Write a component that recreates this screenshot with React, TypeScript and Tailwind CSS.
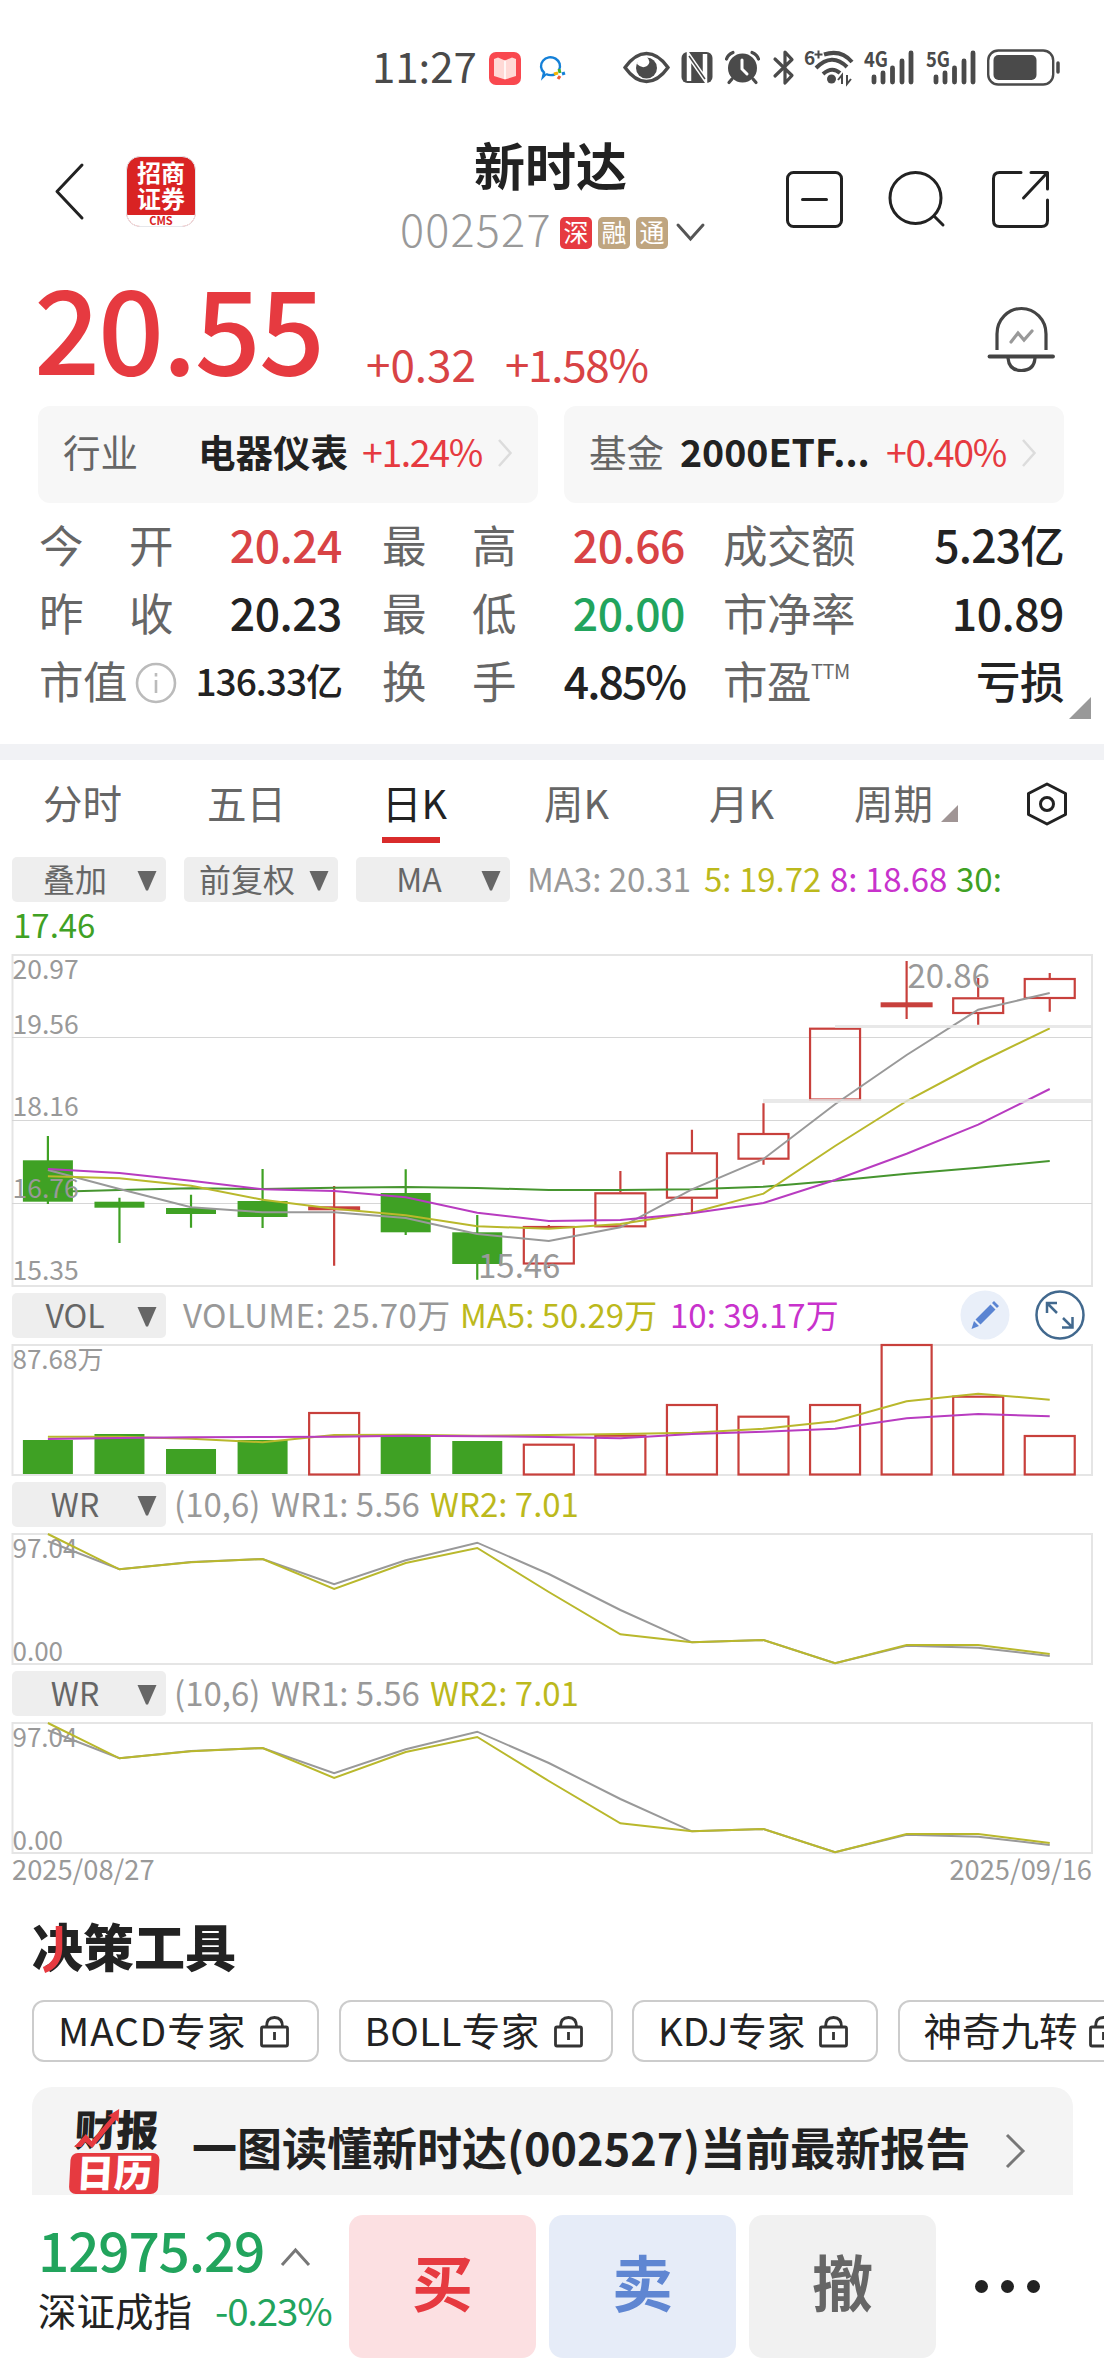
import type { ReactNode } from "react";
import clsx from "clsx";

const GREEN = "#3fa124";
const RED = "#c8403c";
const GRAY = "#999999";
const YELLOW = "#b9b82c";
const PURPLE = "#b83cc0";

const STEP = 71.56;
const xAt = (i: number) => 47.9 + STEP * i;
const toPoints = (ys: number[]) => ys.map((y, i) => `${xAt(i)},${y}`).join(" ");

type Candle = { up: boolean; top: number; bottom: number; high: number; low: number };

const candles: Candle[] = [
  { up: false, top: 1160.3, bottom: 1201.7, high: 1136, low: 1204 },
  { up: false, top: 1201.7, bottom: 1207.7, high: 1197.7, low: 1243 },
  { up: false, top: 1208, bottom: 1214, high: 1194.7, low: 1227.7 },
  { up: false, top: 1201, bottom: 1217, high: 1169, low: 1228 },
  { up: true, top: 1206.3, bottom: 1210.3, high: 1186, low: 1265.7 },
  { up: false, top: 1193, bottom: 1232.3, high: 1169.3, low: 1235 },
  { up: false, top: 1232.3, bottom: 1264, high: 1215, low: 1279.7 },
  { up: true, top: 1226, bottom: 1264.5, high: 1225, low: 1268 },
  { up: true, top: 1192.3, bottom: 1227.3, high: 1171, low: 1227.3 },
  { up: true, top: 1152.3, bottom: 1198.7, high: 1129.7, low: 1213.3 },
  { up: true, top: 1133, bottom: 1159.7, high: 1103.3, low: 1164.7 },
  { up: true, top: 1027.7, bottom: 1100.5, high: 1027.7, low: 1100.5 },
  { up: true, top: 1002.3, bottom: 1007.3, high: 961, low: 1019 },
  { up: true, top: 997.3, bottom: 1014, high: 978, low: 1024.7 },
  { up: true, top: 978, bottom: 999, high: 973, low: 1011.7 },
];

const ma3 = [1170, 1189, 1207.3, 1212.3, 1212.3, 1218, 1234, 1241, 1227.3, 1189.3, 1159, 1104.3, 1055, 1009.7, 993];
const ma5 = [1176.3, 1178.3, 1185.7, 1199.7, 1208.7, 1215.3, 1226.3, 1228.7, 1224, 1212.7, 1193.7, 1146, 1101, 1063, 1028.3];
const ma8 = [1169, 1173, 1180.7, 1189.3, 1191, 1197.3, 1212.7, 1221, 1220, 1213.3, 1203, 1180, 1153.7, 1124.7, 1089];
const ma30 = [1192, 1190, 1188.3, 1189, 1187.7, 1187, 1188, 1190, 1190, 1189.3, 1186.7, 1180.7, 1173.7, 1167.7, 1161];

const volumes = [
  { up: false, y: 96 }, { up: false, y: 90 }, { up: false, y: 105 }, { up: false, y: 96 }, { up: true, y: 68 },
  { up: false, y: 92 }, { up: false, y: 97 }, { up: true, y: 99.7 }, { up: true, y: 90.7 }, { up: true, y: 60 },
  { up: true, y: 71.7 }, { up: true, y: 60 }, { up: true, y: 0 }, { up: true, y: 51.7 }, { up: true, y: 91 },
];
const volMa5 = [92.7, 92.7, 94.7, 98.3, 91, 90.7, 91.7, 91, 90, 88.7, 84.7, 77.3, 57.3, 49.7, 55.7];
const volMa10 = [95, 94, 93.3, 93, 92.7, 91.7, 92.3, 93, 94.3, 90, 87.7, 84.7, 74.3, 70, 72.3];

const wr1 = [9.3, 37.3, 30, 27, 52.3, 28.3, 10.7, 42, 78, 110.3, 108, 131.3, 113.7, 115.7, 124];
const wr2 = [2, 37.3, 30.3, 27, 57, 31, 16, 60, 102.3, 110.3, 108, 131.3, 113, 113, 122];

function StatusBar() {
  return (
    <div className="flex h-[136px] items-start pt-[48px] text-[#4a4a4a]">
      <span className="ml-[372px] h-10 w-[116px] text-[42px] leading-[34px]">11:27</span>
      <svg className="h-10 w-[34px]" viewBox="0 0 34 40">
        <rect x="1" y="4" width="32" height="33" rx="7" fill="#f9484f" />
        <path d="M6 11 L10 9.500 L17 12.500 L24 9.500 L28 11 V28 L17 31.500 L6 28Z" fill="#ffd9d6" />
        <path d="M17 12.500 V31" stroke="#fff" strokeWidth="1.500" />
      </svg>
      <svg className="ml-[16px] h-10 w-[30px]" viewBox="0 0 30 40" fill="none" strokeWidth="2.400">
        <path d="M8 26 L5 29 L6 24.500 A9.500 8.800 0 1 1 21 22" stroke="#1480d8" />
        <path d="M8 26 Q12 28 17 26.500" stroke="#1480d8" />
        <path d="M21 21 L22 25" stroke="#43b02a" strokeWidth="3" />
        <path d="M24 26 L27 25" stroke="#1480d8" strokeWidth="3" />
        <path d="M16 26 L20 25" stroke="#f5b400" strokeWidth="3" />
        <path d="M20 31 L22 28" stroke="#ee5a36" strokeWidth="3" />
      </svg>
      <svg className="ml-[55px] h-10 w-[47px]" viewBox="0 0 47 40">
        <path d="M2 19.500 Q12 5.500 23.500 5.500 T45 19.500 Q35 33.500 23.500 33.500 T2 19.500Z" fill="none" stroke="#4a4a4a" strokeWidth="3.400" />
        <circle cx="23.500" cy="20" r="10.500" fill="#4a4a4a" />
        <path d="M23 8 Q29 14 24 18 Q19 21 14 16 Q15 9 23 8Z" fill="#fff" />
      </svg>
      <svg className="ml-[11px] h-10 w-[32px]" viewBox="0 0 32 40">
        <rect x="0.500" y="4" width="31" height="31" rx="6" fill="#4a4a4a" />
        <path d="M8 33 V8 L24 31 V6" fill="none" stroke="#fff" strokeWidth="4.500" />
        <path d="M8 8 L24 31" stroke="#4a4a4a" strokeWidth="1.500" />
      </svg>
      <svg className="ml-[11px] h-10 w-[37px]" viewBox="0 0 37 40" fill="none" stroke="#4a4a4a" strokeLinecap="round">
        <circle cx="18.500" cy="20" r="14.500" fill="#4a4a4a" stroke="none" />
        <path d="M2.500 11 Q4 6.500 9 4.500 M34.500 11 Q33 6.500 28 4.500 M8 31 L5 34.500 M29 31 L32 34.500" strokeWidth="3.200" />
        <path d="M18 12 V21 L23 26" stroke="#fff" strokeWidth="3" />
      </svg>
      <svg className="ml-[11px] h-10 w-[24px]" viewBox="0 0 24 40" fill="none" stroke="#4a4a4a" strokeWidth="3.200" strokeLinecap="round" strokeLinejoin="round">
        <path d="M3 11 L20 27.500 L13 35 V4 L20 11.500 L3 28" />
      </svg>
      <svg className="ml-[8px] h-10 w-[52px] overflow-visible" viewBox="0 0 52 40" fill="none" stroke="#4a4a4a" strokeWidth="4">
        <text x="0" y="17" fontSize="19" fontWeight="700" fill="#4a4a4a" stroke="none">6</text>
        <path d="M10.500 6.500 h8 M14.500 2.500 v8" strokeWidth="2" />
        <path d="M20 6.500 Q37 1 48 14 M12 20 Q28 4 43 19 M19 26 Q28 18 36 25" />
        <circle cx="27.500" cy="31" r="4.500" fill="#4a4a4a" stroke="none" />
        <path d="M34 32 L38 27 V36 M43 27 V36 L47 31" strokeWidth="2" />
      </svg>
      {["4G", "5G"].map((net) => (
        <svg key={net} className="ml-[8px] mr-[4px] h-10 w-[50px] overflow-visible" viewBox="0 0 50 40">
          <text x="0" y="19" fontSize="21" fontWeight="700" textLength="24" lengthAdjust="spacingAndGlyphs" fill="#4a4a4a">{net}</text>
          <path d="M10 29 V34 M19 25 V34 M28.500 20 V34 M38 13 V34 M47 5 V34" stroke="#4a4a4a" strokeWidth="4.800" strokeLinecap="round" />
        </svg>
      ))}
      <svg className="ml-[7px] h-10 w-[75px]" viewBox="0 0 75 40">
        <rect x="1.200" y="2.500" width="65" height="34" rx="10" fill="none" stroke="#4a4a4a" strokeWidth="2.400" />
        <rect x="6.500" y="7" width="43" height="25" rx="5" fill="#4a4a4a" />
        <path d="M71 15 V24" stroke="#4a4a4a" strokeWidth="3.500" strokeLinecap="round" />
      </svg>
    </div>
  );
}

function Badge({ children, className }: { children: ReactNode; className: string }) {
  return (
    <span className={clsx("flex h-8 w-8 items-center justify-center rounded-[5px] text-[25px] leading-none text-white", className)}>
      <span className="-mt-[3px]">{children}</span>
    </span>
  );
}

function Header() {
  return (
    <div className="flex h-[134px] items-start">
      <svg className="ml-[54px] mt-[25px] h-[62px] w-[32px]" viewBox="0 0 32 62" fill="none" stroke="#222" strokeWidth="3" strokeLinecap="round" strokeLinejoin="round">
        <path d="M28 4 L3 30.500 L28 57" />
      </svg>
      <div className="ml-[40px] mt-[20px] flex h-[71px] w-[70px] flex-col items-center overflow-hidden rounded-[14px] border border-gray-200 bg-[#d92323] text-white">
        <div className="pt-[2px] text-center text-[24px] font-bold leading-[26px]">
          <div>招商</div>
          <div>证券</div>
        </div>
        <div className="mt-[4px] flex w-[72px] flex-1 items-center justify-center bg-white pb-[2px] text-[11px] font-bold leading-none text-[#d92323]">CMS</div>
      </div>
      <div className="ml-[194px] w-[330px]">
        <div className="pl-[84px] pt-px text-[51px] font-bold leading-[54px] text-[#222]">新时达</div>
        <div className="mt-[12px] flex h-[50px] items-center pl-[10px]">
          <span className="w-[160px] text-[45px] font-light leading-[50px] tracking-[1.2px] text-[#999]">002527</span>
          <div className="mt-[10px] flex h-8 gap-[6px]">
            <Badge className="bg-[#e63a40]">深</Badge>
            <Badge className="bg-[#bfa580]">融</Badge>
            <Badge className="bg-[#bfa580]">通</Badge>
          </div>
          <svg className="ml-[7px] mt-[8px] h-5 w-[32px]" viewBox="0 0 32 20" fill="none" stroke="#555" strokeWidth="3" strokeLinecap="round">
            <path d="M3 3 L15.500 17 L28 3" />
          </svg>
        </div>
      </div>
      <div className="ml-[65px] mt-[34px] flex gap-[43px]">
        <svg className="h-[60px] w-[60px]" viewBox="0 0 60 60" fill="none" stroke="#222" strokeWidth="3" strokeLinecap="round">
          <rect x="2.500" y="2.500" width="54" height="54" rx="6" />
          <path d="M17.500 29.500 H41.500" />
        </svg>
        <svg className="h-[60px] w-[60px]" viewBox="0 0 60 60" fill="none" stroke="#222" strokeWidth="3" strokeLinecap="round">
          <circle cx="27.500" cy="28" r="25.500" />
          <path d="M46 46 L55 55" />
        </svg>
        <svg className="h-[60px] w-[60px]" viewBox="0 0 60 60" fill="none" stroke="#222" strokeWidth="3" strokeLinecap="round" strokeLinejoin="round">
          <path d="M30 2.500 H8.500 Q2.500 2.500 2.500 8.500 V50.500 Q2.500 56.500 8.500 56.500 H50.500 Q56.500 56.500 56.500 50.500 V30" />
          <path d="M40 2.500 H56.500 V19 M56 3 L32.500 28" />
        </svg>
      </div>
    </div>
  );
}

function Price() {
  return (
    <div className="flex h-[136px] items-start text-[#e63a40]">
      <div className="-mt-[4px] ml-[34px] w-[332px] text-[116px] font-medium leading-[116px] tracking-[-2px]">20.55</div>
      <div className="mt-[66px] w-[139px] text-[44px] leading-[54px] text-[#d84345]">+0.32</div>
      <div className="mt-[66px] w-[481px] text-[44px] leading-[54px] tracking-[-1.3px] text-[#d84345]">+1.58%</div>
      <svg className="mt-[36px] h-[70px] w-[70px]" viewBox="0 0 70 70" fill="none" stroke="#444" strokeWidth="3.200" strokeLinecap="round">
        <path d="M11 44 V28 A24.500 25.500 0 0 1 60 28 V44" strokeLinecap="butt" />
        <path d="M3.500 50.500 H67" strokeWidth="3.800" />
        <path d="M22 52 Q23 64.500 35.500 64.500 T49 52" />
        <path d="M25 36 L32 27 L38 34 L46 25" stroke="#999" />
      </svg>
    </div>
  );
}

function Arrow() {
  return (
    <svg className="mt-1 h-[30px] w-4" viewBox="0 0 16 30" fill="none" stroke="#dcdcdc" strokeWidth="2.500">
      <path d="M2 2 L13.500 15 L2 28" />
    </svg>
  );
}

function RelatedCards() {
  return (
    <div className="flex gap-[26px] pl-[38px]">
      <div className="flex h-[97px] w-[500px] items-center rounded-[12px] bg-[#f7f7f7] pb-[7px] text-[37.500px] leading-[50px]">
        <span className="ml-[25px] w-[135px] text-[#666]">行业</span>
        <span className="w-[164px] font-bold text-[#222]">电器仪表</span>
        <span className="w-[135px] tracking-[-1.4px] text-[#e63a40]">+1.24%</span>
        <Arrow />
      </div>
      <div className="flex h-[97px] w-[500px] items-center rounded-[12px] bg-[#f7f7f7] pb-[7px] text-[37.500px] leading-[50px]">
        <span className="ml-[25px] w-[91px] text-[#666]">基金</span>
        <span className="w-[206px] font-bold text-[#222]">2000ETF...</span>
        <span className="w-[135px] tracking-[-1.4px] text-[#e63a40]">+0.40%</span>
        <Arrow />
      </div>
    </div>
  );
}

function Stat({ label, value, className }: { label: ReactNode; value: string; className?: string }) {
  return (
    <div className="flex h-[68px] items-center justify-between">
      <span className="flex w-[134px] shrink-0 justify-between whitespace-nowrap text-[44.500px] leading-[60px] text-[#666]">{label}</span>
      <span className={clsx("whitespace-nowrap font-medium", className)}>{value}</span>
    </div>
  );
}

const split = (s: string) => s.split("").map((c) => <span key={c}>{c}</span>);

function Stats() {
  return (
    <div className="relative flex h-[241px] pl-[39px] pt-[7px] text-[44.500px] leading-[60px] tracking-[-0.5px] text-[#222]">
      <div className="w-[303px]">
        <Stat label={split("今开")} value="20.24" className="text-[#d84345]" />
        <Stat label={split("昨收")} value="20.23" />
        <Stat
          label={
            <span className="flex items-center">
              市值
              <svg className="ml-[8px] mt-[5px] h-[42px] w-[42px] shrink-0" viewBox="0 0 42 42" fill="none" stroke="#bbb" strokeWidth="2.600">
                <circle cx="21" cy="21" r="19" />
                <path d="M21 18 V31 M21 11 V14.500" />
              </svg>
            </span>
          }
          value="136.33亿"
          className="text-[37px] tracking-[-1px]"
        />
      </div>
      <div className="ml-[40px] w-[303px]">
        <Stat label={split("最高")} value="20.66" className="text-[#d84345]" />
        <Stat label={split("最低")} value="20.00" className="text-[#22a45d]" />
        <Stat label={split("换手")} value="4.85%" className="tracking-[-2px]" />
      </div>
      <div className="ml-[38px] w-[341px]">
        <Stat label="成交额" value="5.23亿" className="tracking-[-0.8px]" />
        <Stat label="市净率" value="10.89" />
        <Stat
          label={
            <span className="flex">
              市盈<span className="-mt-[9px] text-[20px]">TTM</span>
            </span>
          }
          value="亏损"
        />
      </div>
      <svg className="absolute left-[1068px] top-[193px] h-6 w-6" viewBox="0 0 24 24">
        <path d="M23 1 V23 H1Z" fill="#999" />
      </svg>
    </div>
  );
}

function Tabs() {
  return (
    <div className="flex h-[97px] items-start pt-[12px] text-[39.500px] leading-[60px] text-[#666]">
      <span className="ml-[43px] w-[164px]">分时</span>
      <span className="w-[175px]">五日</span>
      <span className="w-[162px] text-[#222]">
        日K
        <span className="mt-[5px] block h-[6px] w-[58px] bg-[#d92b2b]" />
      </span>
      <span className="w-[165px]">周K</span>
      <span className="w-[145px]">月K</span>
      <span className="w-[87px]">周期</span>
      <svg className="mt-[33px] h-[18px] w-[18px]" viewBox="0 0 18 18">
        <path d="M17 0 V17 H0Z" fill="#a09595" />
      </svg>
      <svg className="ml-[66px] mt-[9px] h-[46px] w-[44px]" viewBox="0 0 44 46" fill="none" stroke="#222" strokeWidth="3">
        <path d="M22 3 L40.500 12.500 V33.500 L22 43 L3.500 33.500 V12.500Z" strokeLinejoin="round" />
        <circle cx="22" cy="23" r="6.500" />
      </svg>
    </div>
  );
}

function Picker({ children }: { children: ReactNode }) {
  return (
    <div className="flex h-[45px] w-[154px] shrink-0 items-center rounded-[5px] bg-[#eee] text-[32px] leading-[40px] text-[#666]">
      <span className="ml-[8px] w-[110px] whitespace-nowrap pb-[4px] text-center">{children}</span>
      <svg className="ml-[7px] mt-[2px] h-5 w-[20px]" viewBox="0 0 20 20">
        <path d="M0.500 0 H19.500 L11 19.500 H9Z" fill="#666" />
      </svg>
    </div>
  );
}

function Legend({ children, className }: { children: ReactNode; className: string }) {
  return <span className={clsx("shrink-0 whitespace-nowrap text-[33px] leading-[42px]", className)}>{children}</span>;
}

function Line({ ys, color }: { ys: number[]; color: string }) {
  return <polyline points={toPoints(ys)} fill="none" stroke={color} strokeWidth="2" />;
}

function PriceChart() {
  return (
    <svg className="block h-[341px] w-full" viewBox="0 952 1104 341">
      <rect x="12.500" y="955" width="1079.500" height="331" fill="none" stroke="#e5e5e5" strokeWidth="2" />
      <path d="M12 1037.500 H1092 M12 1120.500 H1092 M12 1203.500 H1092" stroke="#d6d6d6" strokeWidth="1" />
      {candles.map((c, i) => {
        const x = xAt(i);
        const color = c.up ? RED : GREEN;
        const flat = c.bottom - c.top < 7;
        return (
          <g key={i}>
            <path d={`M${x} ${c.high} V${c.up && !flat ? c.top : c.low} M${x} ${c.bottom} V${c.low}`} stroke={color} strokeWidth="2.200" />
            {c.up && !flat ? (
              <rect x={x - 25} y={c.top + 1} width="50" height={c.bottom - c.top - 2} fill="none" stroke={color} strokeWidth="2.200" />
            ) : (
              <rect x={x - (c.up ? 26 : 25)} y={c.top} width={c.up ? 52 : 50} height={c.bottom - c.top} fill={color} />
            )}
          </g>
        );
      })}
      <Line ys={ma30} color="#46952f" />
      <Line ys={ma3} color={GRAY} />
      <Line ys={ma5} color={YELLOW} />
      <Line ys={ma8} color={PURPLE} />
      <path d="M835 1026.500 H1092" stroke="#e4e4e4" strokeOpacity="0.85" strokeWidth="3" />
      <path d="M763 1101 H1092" stroke="#e4e4e4" strokeOpacity="0.8" strokeWidth="4" />
      <g fill={GRAY} fontSize="26.500">
        <text x="12.500" y="979">20.97</text>
        <text x="12.500" y="1034">19.56</text>
        <text x="12.500" y="1116">18.16</text>
        <text x="12.500" y="1198">16.76</text>
        <text x="12.500" y="1280">15.35</text>
      </g>
      <g fill={GRAY} fontSize="33">
        <text x="907.500" y="988">20.86</text>
        <text x="478" y="1277.500">15.46</text>
      </g>
    </svg>
  );
}

function VolumeChart() {
  return (
    <svg className="block h-[139px] w-full" viewBox="0 -1 1104 139">
      <rect x="12.500" y="1" width="1079.500" height="130" fill="none" stroke="#e5e5e5" strokeWidth="2" />
      {volumes.map((v, i) =>
        v.up ? (
          <rect key={i} x={xAt(i) - 25} y={v.y + 1} width="50" height={129.5 - v.y} fill="none" stroke={RED} strokeWidth="2.200" />
        ) : (
          <rect key={i} x={xAt(i) - 25} y={v.y} width="50" height={130 - v.y} fill={GREEN} />
        )
      )}
      <Line ys={volMa5} color={YELLOW} />
      <Line ys={volMa10} color={PURPLE} />
      <text x="12.500" y="25" fontSize="26" fill={GRAY}>87.68万</text>
    </svg>
  );
}

function WrPanel() {
  return (
    <div className="h-[189px]">
      <div className="flex h-[45px] pl-[12px]">
        <Picker>WR</Picker>
        <Legend className="ml-[8px] w-[97px] text-[#999]">(10,6)</Legend>
        <Legend className="w-[159px] text-[#999]">WR1: 5.56</Legend>
        <Legend className="text-[#bcb91c]">WR2: 7.01</Legend>
      </div>
      <svg className="mt-[5px] block h-[139px] w-full" viewBox="0 0 1104 139">
        <rect x="12.500" y="2" width="1079.500" height="130" fill="none" stroke="#e5e5e5" strokeWidth="2" />
        <text x="12.500" y="25.500" fontSize="26" fill={GRAY}>97.04</text>
        <text x="12.500" y="129" fontSize="26" fill={GRAY}>0.00</text>
        <Line ys={wr1} color={GRAY} />
        <Line ys={wr2} color={YELLOW} />
      </svg>
    </div>
  );
}

function Charts() {
  return (
    <div>
      <div className="flex h-[45px] pl-[12px]">
        <Picker>叠加</Picker>
        <div className="ml-[18px]"><Picker>前复权</Picker></div>
        <div className="ml-[18px]"><Picker>MA</Picker></div>
        <Legend className="ml-[17px] w-[177px] text-[#999]">MA3: 20.31</Legend>
        <Legend className="w-[126px] text-[#bcb91c]">5: 19.72</Legend>
        <Legend className="w-[126px] text-[#c832cc]">8: 18.68</Legend>
        <Legend className="text-[#3fa124]">30:</Legend>
      </div>
      <div className="h-[50px] pl-[13px] pt-px">
        <Legend className="block text-[#3fa124]">17.46</Legend>
      </div>
      <PriceChart />
      <div className="flex h-[50px] pl-[12px]">
        <Picker>VOL</Picker>
        <Legend className="ml-[17px] w-[277px] tracking-[0.4px] text-[#999]">VOLUME: 25.70万</Legend>
        <Legend className="w-[210px] text-[#bcb91c]">MA5: 50.29万</Legend>
        <Legend className="w-[290px] text-[#c832cc]">10: 39.17万</Legend>
        <svg className="-mt-[3px] h-[50px] w-[50px] shrink-0" viewBox="0 0 50 50">
          <circle cx="25" cy="25" r="24.500" fill="#e9eff9" />
          <path d="M11.500 39 L14 31 L19 36Z M15.500 29.500 L30.500 14.500 L35.500 19.500 L20.500 34.500Z M32 13 L34 11 L39 16 L37 18Z" fill="#5a84d2" />
        </svg>
        <svg className="-mt-[3px] ml-[25px] h-[50px] w-[50px] shrink-0" viewBox="0 0 50 50" fill="none" stroke="#42698e" strokeWidth="2.500">
          <circle cx="25" cy="25" r="23.500" />
          <path d="M12 23 V13 H22 M12.500 13.500 L22 23 M28 28 L37 37 M27 37.500 H37.500 V27" />
        </svg>
      </div>
      <VolumeChart />
      <WrPanel />
      <WrPanel />
      <div className="-mt-[12px] flex h-[47px] justify-between px-[12px] text-[27.300px] leading-[40px] text-[#999]">
        <span>2025/08/27</span>
        <span>2025/09/16</span>
      </div>
    </div>
  );
}

function Lock() {
  return (
    <svg className="mt-[2px] h-[34px] w-[32px] shrink-0" viewBox="0 0 32 34" fill="none" stroke="#333" strokeWidth="2.800">
      <rect x="2.500" y="12" width="26" height="19" rx="1.500" />
      <path d="M7.500 12 Q7.500 2.500 15.500 2.500 T23.500 12 M15.500 17 V25" />
    </svg>
  );
}

function Tools() {
  const tools = [
    { name: "MACD专家", className: "w-[287px] tracking-[1px]" },
    { name: "BOLL专家", className: "w-[274px] tracking-[0.4px]" },
    { name: "KDJ专家", className: "w-[246px]" },
    { name: "神奇九转", className: "w-[250px]" },
  ];

  return (
    <div className="h-[300px] overflow-hidden pl-[32px]">
      <div className="relative h-[105px] pt-[20px] text-[51px] font-black leading-[60px] text-[#222]">
        决策工具
        {/* 决字红色笔画 */}
        <svg className="absolute left-[10px] top-[30px] h-[50px] w-[24px]" viewBox="0 0 24 50" fill="none" stroke="#e63a40" strokeWidth="6.500">
          <path d="M17 1 V24 Q16 40 2 45" />
        </svg>
      </div>
      <div className="flex gap-[19.500px]">
        {tools.map((t) => (
          <div key={t.name} className={clsx("flex h-[62px] shrink-0 items-center justify-between rounded-[12px] border-2 border-[#ccc] pl-[24px] pr-[26px] text-[38.500px] leading-[50px] text-[#222]", t.className)}>
            <span className="whitespace-nowrap pb-[4px]">{t.name}</span>
            <Lock />
          </div>
        ))}
      </div>
      <div className="mt-[25px] flex h-[108px] w-[1041px] items-start rounded-t-[20px] bg-[#f4f4f4]">
        <div className="relative ml-[39px] mt-[20px] w-[89px] -skew-x-3 text-center text-[42px] font-black">
          <div className="h-[46px] leading-[42px] text-[#222]">财报</div>
          <svg className="absolute left-[2px] top-[2px] h-[40px] w-[46px]" viewBox="0 0 46 40">
            <path d="M1 38 L12 25 L18 32 L37 8 L33 7 L44 0 V13 L41 11 L19 39 L12 33 L8 38Z" fill="#e63a40" />
          </svg>
          <div className="h-[41px] rounded-[7px] bg-[#e63a40] text-[38px] leading-[36px] text-white">日历</div>
        </div>
        <div className="ml-[32px] mt-[30px] w-[813px] whitespace-nowrap text-[45px] font-bold leading-[60px] text-[#222]">一图读懂新时达(002527)当前最新报告</div>
        <svg className="mt-[46px] h-[36px] w-[22px]" viewBox="0 0 22 36" fill="none" stroke="#777" strokeWidth="3">
          <path d="M2 2 L18 18 L2 34" />
        </svg>
      </div>
    </div>
  );
}

function BottomBar() {
  return (
    <div className="flex h-[182px] items-start">
      <div className="ml-[38px] w-[311px]">
        <div className="flex h-[86px] items-start pt-[23px] text-[#22a45d]">
          <span className="w-[242px] text-[55px] font-medium leading-[60px] tracking-[-1.2px]">12975.29</span>
          <svg className="mt-[29px] h-[20px] w-[32px]" viewBox="0 0 32 20" fill="none" stroke="#777" strokeWidth="3">
            <path d="M2 18 L15.500 3 L29 18" />
          </svg>
        </div>
        <div className="mt-[3px] flex text-[38.500px] leading-[50px]">
          <span className="w-[177px] text-[#222]">深证成指</span>
          <span className="whitespace-nowrap tracking-[-1.2px] text-[#22a45d]">-0.23%</span>
        </div>
      </div>
      <div className="mt-[20px] flex gap-[13px] text-[61px] font-bold leading-[132px]">
        <div className="h-[143px] w-[187px] rounded-[14px] bg-[#fce0e2] text-center text-[#e63a40]">买</div>
        <div className="h-[143px] w-[187px] rounded-[14px] bg-[#e6ecf8] text-center text-[#5f86d2]">卖</div>
        <div className="h-[143px] w-[187px] rounded-[14px] bg-[#f1f1f1] text-center text-[#666]">撤</div>
      </div>
      <div className="ml-[39px] mt-[85px] flex gap-[13px]">
        <span className="h-[13px] w-[13px] rounded-full bg-[#222]" />
        <span className="h-[13px] w-[13px] rounded-full bg-[#222]" />
        <span className="h-[13px] w-[13px] rounded-full bg-[#222]" />
      </div>
    </div>
  );
}

export default function App() {
  return (
    <div className="h-[2376px] w-[1104px] overflow-hidden bg-white font-['Noto_Sans_CJK_SC',sans-serif]">
      <StatusBar />
      <Header />
      <Price />
      <RelatedCards />
      <Stats />
      <div className="h-4 bg-[#f1f2f5]" />
      <Tabs />
      <Charts />
      <Tools />
      <BottomBar />
    </div>
  );
}
